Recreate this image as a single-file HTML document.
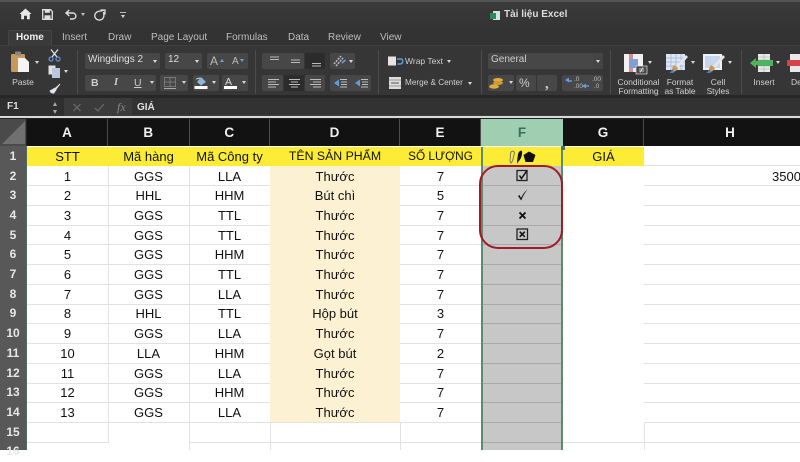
<!DOCTYPE html>
<html><head><meta charset="utf-8"><style>
*{box-sizing:border-box}
html,body{margin:0;padding:0}
body{width:800px;height:450px;overflow:hidden;position:relative;background:#fff;font-family:"Liberation Sans",sans-serif;filter:blur(.3px)}
.t{position:absolute;white-space:nowrap;line-height:12px;color:#d0d0d0;font-size:9px}
.c{transform:translateX(-50%);text-align:center}
.b{position:absolute;background:#474747;border-radius:2px}
.d{position:absolute;background:#2c2c2c}
.sep{position:absolute;width:1px;top:50px;height:44px;background:#4c4c4c}
.ar{position:absolute;width:0;height:0;border-left:2.5px solid transparent;border-right:2.5px solid transparent;border-top:3px solid #d8d8d8}
svg{position:absolute;overflow:visible}
.tab{font-size:10px;top:31.5px;color:#bdbdbd}
.h{position:absolute;top:119px;height:27px;line-height:28px;text-align:center;color:#f0f0f0;font-weight:bold;font-size:13.5px;background:#121212;border-right:1px solid #4d4d4d}
.n{position:absolute;left:0;width:26px;height:19.7px;line-height:19px;text-align:center;color:#e8e8e8;font-weight:bold;font-size:12px}
.row{position:absolute;left:27px;width:773px;height:19.7px;line-height:19.5px;font-size:13px;color:#111}
.row span{position:absolute;top:0;text-align:center;height:100%;display:block}
.A{left:0;width:81px}.B{left:81px;width:81px}.C{left:162px;width:81px}.D{left:243px;width:130px}.E{left:373px;width:81px}.G{left:536px;width:81px}
.l{position:absolute;background:#e2e2e2}
</style></head><body>
<!-- chrome background -->
<div style="position:absolute;left:0;top:0;width:800px;height:97px;background:linear-gradient(#3b3b3b,#333 30%,#303030)"></div>
<div style="position:absolute;left:0;top:0;width:800px;height:2px;background:#555"></div>
<div style="position:absolute;left:0;top:45px;width:800px;height:1px;background:#3f3f3f"></div>
<div style="position:absolute;left:8px;top:30px;width:44px;height:17px;background:#3a3a3a;border:1px solid #444;border-bottom:0"></div>
<div style="position:absolute;left:0;top:46px;width:800px;height:51px;background:#363636"></div>
<div style="position:absolute;left:0;top:95px;width:800px;height:3px;background:#272727"></div>

<!-- quick access -->
<svg style="left:19px;top:8px" width="13" height="12" viewBox="0 0 13 12"><path d="M6.5 0.5L0.5 6H2.2V11.2H5V7.8H8V11.2H10.8V6H12.5Z" fill="#e8e8e8"/></svg>
<svg style="left:42px;top:9px" width="11" height="11" viewBox="0 0 11 11"><path d="M0.7 0.7H8.5L10.3 2.5V10.3H0.7Z" fill="none" stroke="#e0e0e0" stroke-width="1.3"/><rect x="2.8" y="0.8" width="5" height="3" fill="#e0e0e0"/><rect x="2.5" y="6.3" width="6" height="4" fill="#e0e0e0"/></svg>
<svg style="left:65px;top:9px" width="12" height="11" viewBox="0 0 12 11"><path d="M4.3 1L1 4L4.3 7M1.2 4H7.5C12 4 12 10 7.5 10H5" fill="none" stroke="#e0e0e0" stroke-width="1.4"/></svg>
<div class="ar" style="left:81px;top:13px;border-top-color:#bbb"></div>
<svg style="left:94px;top:9px" width="12" height="12" viewBox="0 0 12 12"><path d="M6.5 1H11V5.5M10 1.5C9.5 1.2 8 1.6 7 2C2.5 2 0 5 1 8C2 11 6 12 8.5 10C10.5 8 10 5 9.5 3" fill="none" stroke="#e0e0e0" stroke-width="1.3"/></svg>
<div style="position:absolute;left:120px;top:12px;width:6px;height:1px;background:#bbb"></div>
<div class="ar" style="left:120.5px;top:15px"></div>

<!-- title -->
<svg style="left:490px;top:10px" width="11" height="11" viewBox="0 0 11 11"><rect x="3" y="1" width="7" height="9" fill="#d7e6dd"/><rect x="0" y="3" width="6" height="6" fill="#2f8a5a"/></svg>
<div class="t" style="left:504px;top:9px;font-size:10px;font-weight:bold;color:#dcdcdc">Tài liệu Excel</div>

<!-- tabs -->
<div class="t tab" style="left:16px;font-weight:bold;color:#f0f0f0">Home</div>
<div class="t tab" style="left:62px">Insert</div>
<div class="t tab" style="left:108px">Draw</div>
<div class="t tab" style="left:151px">Page Layout</div>
<div class="t tab" style="left:226px">Formulas</div>
<div class="t tab" style="left:288px">Data</div>
<div class="t tab" style="left:328px">Review</div>
<div class="t tab" style="left:380px">View</div>

<!-- clipboard -->
<svg style="left:10px;top:51px" width="20" height="23" viewBox="0 0 20 23"><rect x="1" y="3" width="14" height="18" rx="1.5" fill="#c9995a"/><rect x="5" y="0.5" width="6" height="4" rx="1" fill="#888"/><path d="M8 7H15L19 11V21H8Z" fill="#f4f4f4"/></svg>
<div class="ar" style="left:34.5px;top:61px"></div>
<div class="t c" style="left:23px;top:76px;font-size:8.5px">Paste</div>
<svg style="left:48px;top:49px" width="13" height="13" viewBox="0 0 13 13"><path d="M3 0.5L9 8M10 0.5L4 8" stroke="#e4e4e4" stroke-width="1.3" fill="none"/><circle cx="3" cy="10" r="2" fill="none" stroke="#5e8fd0" stroke-width="1.3"/><circle cx="10" cy="10" r="2" fill="none" stroke="#5e8fd0" stroke-width="1.3"/></svg>
<svg style="left:48px;top:65px" width="13" height="13" viewBox="0 0 13 13"><rect x="0.5" y="0.5" width="7" height="9" fill="#e0e0e0"/><rect x="4" y="3" width="8" height="10" fill="#b9c8dc"/></svg>
<div class="ar" style="left:64px;top:70px"></div>
<svg style="left:48px;top:83px" width="13" height="11" viewBox="0 0 13 12"><path d="M12.5 0.5L7 5.5L8.5 7L12.8 1.5Z" fill="#e8e8e8"/><path d="M7 5L1 8.5C2 10.5 4 12 6 11.5L9 7Z" fill="#dfe6ee"/><path d="M1 8.5C2 10.5 3 11 4.5 11.5L2 11Z" fill="#5e8fd0"/></svg>
<div class="sep" style="left:77px"></div>

<!-- font -->
<div class="b" style="left:85px;top:53px;width:75px;height:16px"></div>
<div class="t" style="left:88px;top:54px;font-size:10px;color:#ddd">Wingdings 2</div>
<div class="ar" style="left:153px;top:60px"></div>
<div class="b" style="left:165px;top:53px;width:37px;height:16px"></div>
<div class="t" style="left:168px;top:54px;font-size:10px;color:#ddd">12</div>
<div class="ar" style="left:195px;top:60px"></div>
<div class="b" style="left:207px;top:53px;width:41px;height:16px"></div>
<div class="t" style="left:210px;top:55px;font-size:12px;color:#bbb">A</div>
<div class="t" style="left:232px;top:56px;font-size:10px;color:#bbb">A</div>
<div class="ar" style="left:220px;top:59px;border-top:0;border-bottom:3px solid #6fa0d8"></div>
<div class="ar" style="left:240px;top:59px;border-top-color:#6fa0d8"></div>
<div class="b" style="left:85px;top:75px;width:71px;height:16px"></div>
<div class="t" style="left:91px;top:77px;font-size:10.5px;font-weight:bold;color:#ccc">B</div>
<div class="t" style="left:114px;top:77px;font-size:10.5px;font-style:italic;font-family:'Liberation Serif',serif;font-weight:bold;color:#ccc">I</div>
<div class="t" style="left:134px;top:77px;font-size:10.5px;text-decoration:underline;color:#ccc">U</div>
<div class="ar" style="left:150px;top:81px"></div>
<div class="b" style="left:160px;top:75px;width:28px;height:16px"></div>
<svg style="left:164px;top:77px" width="13" height="12" viewBox="0 0 13 12"><path d="M0.5 0.5H11.5V9.5H0.5ZM6 0.5V9.5M0.5 5H11.5" fill="none" stroke="#777"/><path d="M0 11.5H12" stroke="#aaa"/></svg>
<div class="ar" style="left:182px;top:81px"></div>
<div class="b" style="left:193px;top:75px;width:26px;height:16px"></div>
<svg style="left:194px;top:76px" width="14" height="14" viewBox="0 0 14 14"><path d="M7 1L12 6L7 9.5L3 6Z" fill="#8fb4dc"/><path d="M2 3L6 2" stroke="#ccc"/><rect x="0.5" y="10" width="13" height="3" fill="#fff"/></svg>
<div class="ar" style="left:212px;top:81px"></div>
<div class="b" style="left:222px;top:75px;width:26px;height:16px"></div>
<div class="t" style="left:225px;top:76px;font-size:10.5px;color:#ddd">A</div>
<div style="position:absolute;left:224px;top:86px;width:13px;height:3px;background:#fff"></div>
<div class="ar" style="left:242px;top:81px"></div>
<div class="sep" style="left:255px"></div>

<!-- alignment -->
<div class="b" style="left:262px;top:53px;width:42px;height:16px"></div>
<div class="d" style="left:305px;top:53px;width:20px;height:16px"></div>
<svg style="left:262px;top:53px" width="63" height="16" viewBox="0 0 63 16"><path d="M8 4H17M8 6.5H17M29 7H38M29 9.5H38M50 10.5H59M50 13H59" stroke="#bbb" fill="none"/></svg>
<div class="b" style="left:330px;top:53px;width:25px;height:16px"></div>
<svg style="left:333px;top:55px" width="13" height="12" viewBox="0 0 13 12"><path d="M1 9L8 1M3 11L10 3" stroke="#bbb" stroke-width="1.5" stroke-dasharray="2 1" fill="none"/><path d="M9 8L12.5 5" stroke="#6fa0d8" stroke-width="1.5"/></svg>
<div class="ar" style="left:349px;top:60px"></div>
<div class="b" style="left:262px;top:75px;width:21px;height:16px"></div>
<div class="d" style="left:284px;top:75px;width:20px;height:16px"></div>
<div class="b" style="left:305px;top:75px;width:20px;height:16px"></div>
<svg style="left:262px;top:75px" width="63" height="16" viewBox="0 0 63 16"><path d="M6 4.5H17M6 7H14M6 9.5H17M6 12H14M27 4.5H38M29 7H36M27 9.5H38M29 12H36M48 4.5H59M51 7H59M48 9.5H59M51 12H59" stroke="#bdbdbd" fill="none"/></svg>
<div class="b" style="left:330px;top:75px;width:41px;height:16px"></div>
<svg style="left:330px;top:75px" width="41" height="16" viewBox="0 0 41 16"><path d="M4 8L9 4.5V11.5ZM25 8L30 4.5V11.5Z" fill="#5e9be0"/><path d="M10 4.5H17M11 7H17M11 9.5H17M10 12H17M31 4.5H38M32 7H38M32 9.5H38M31 12H38" stroke="#bdbdbd" fill="none"/></svg>
<div class="sep" style="left:378px"></div>

<!-- wrap & merge -->
<svg style="left:388px;top:56px" width="16" height="11" viewBox="0 0 16 11"><rect x="0" y="0.5" width="8" height="9" fill="#e4e4e4"/><path d="M9 3H13C15.5 3 15.5 8 12 8H9.5" stroke="#5e9be0" stroke-width="1.4" fill="none"/></svg>
<div class="t" style="left:405px;top:55px;font-size:8.5px">Wrap Text</div>
<div class="ar" style="left:447px;top:60px"></div>
<svg style="left:389px;top:77px" width="12" height="12" viewBox="0 0 12 12"><rect width="12" height="12" fill="#dcdcdc"/><path d="M2 6H10" stroke="#555"/><path d="M0 3H12M0 9H12" stroke="#999"/></svg>
<div class="t" style="left:405px;top:77px;font-size:8.2px">Merge &amp; Center</div>
<div class="ar" style="left:468px;top:82px"></div>
<div class="sep" style="left:481px"></div>

<!-- number -->
<div class="b" style="left:488px;top:53px;width:115px;height:16px"></div>
<div class="t" style="left:491px;top:54px;font-size:10px;color:#ccc">General</div>
<div style="position:absolute;left:593px;top:53px;width:10px;height:16px;background:#444"></div>
<div class="ar" style="left:596px;top:60px"></div>
<div class="b" style="left:488px;top:75px;width:26px;height:16px"></div>
<svg style="left:489px;top:78px" width="15" height="11" viewBox="0 0 15 11"><ellipse cx="9" cy="2" rx="5" ry="2" fill="#e2aa3c"/><ellipse cx="9" cy="5" rx="5" ry="2" fill="#d19a30"/><ellipse cx="5" cy="8.5" rx="5" ry="2.2" fill="#e2aa3c"/></svg>
<div class="ar" style="left:509px;top:81px"></div>
<div class="b" style="left:516px;top:75px;width:20px;height:16px"></div>
<div class="t" style="left:519px;top:77px;font-size:12px;color:#ccc">%</div>
<div class="b" style="left:537px;top:75px;width:20px;height:16px"></div>
<div class="t" style="left:545px;top:78px;font-size:15px;font-weight:bold;font-family:'Liberation Serif',serif;color:#ccc">,</div>
<div class="b" style="left:562px;top:75px;width:41px;height:16px"></div>
<svg style="left:562px;top:75px" width="41" height="16" viewBox="0 0 41 16"><path d="M3 6L7 3.5V8.5ZM20 12L24 9.5V14.5Z" fill="#5e9be0" transform="translate(0 -1)"/><path d="M7 6H10M24 11H27" stroke="#5e9be0" stroke-width="1.5"/></svg>
<div class="t" style="left:574px;top:76px;font-size:6.5px;line-height:7px;color:#bbb">.0<br>.00</div>
<div class="t" style="left:592px;top:76px;font-size:6.5px;line-height:7px;color:#bbb">.00<br>&nbsp;.0</div>
<div class="sep" style="left:610px"></div>

<!-- styles -->
<svg style="left:624px;top:54px" width="25" height="20" viewBox="0 0 25 20"><rect width="19" height="18" fill="#f0f0f0"/><rect x="5" y="0" width="4" height="18" fill="#d98a92"/><rect x="9" y="5" width="5" height="9" fill="#7f9fd8"/><rect x="5" y="5" width="4" height="9" fill="#7f9fd8"/><rect x="12" y="12" width="11" height="8" fill="#4a4a4a" stroke="#ddd" stroke-width="0.7"/><path d="M15 15H20M15 17H20M19 13.5L16 18.5" stroke="#eee" stroke-width="0.7"/></svg>
<div class="ar" style="left:648px;top:61px"></div>
<div class="t c" style="left:638.5px;top:78px;font-size:8.4px;line-height:9px">Conditional<br>Formatting</div>
<svg style="left:666px;top:54px" width="23" height="20" viewBox="0 0 23 20"><rect width="19" height="16" fill="#dde6f2"/><path d="M0 4H19M0 8H19M0 12H19M5 0V16M10 0V16M15 0V16" stroke="#9fb4d4" stroke-width="0.7"/><path d="M20 1L10 12L12 14L22 3Z" fill="#e6e6e6"/><path d="M8 11L12 14C11 17 8 18 5 19C6 16 6 13 8 11Z" fill="#c9995a"/><path d="M3 19C5 18 6 16 7 15L8 19Z" fill="#3f7fd0"/></svg>
<div class="ar" style="left:691px;top:61px"></div>
<div class="t c" style="left:680px;top:78px;font-size:8.4px;line-height:9px">Format<br>as Table</div>
<svg style="left:703px;top:54px" width="23" height="20" viewBox="0 0 23 20"><rect width="19" height="16" fill="#eef2f8"/><rect x="2" y="2" width="15" height="12" fill="#c5d6ec"/><path d="M20 1L10 12L12 14L22 3Z" fill="#e6e6e6"/><path d="M8 11L12 14C11 17 8 18 5 19C6 16 6 13 8 11Z" fill="#c9995a"/><path d="M3 19C5 18 6 16 7 15L8 19Z" fill="#3f7fd0"/></svg>
<div class="ar" style="left:728px;top:61px"></div>
<div class="t c" style="left:718px;top:78px;font-size:8.4px;line-height:9px">Cell<br>Styles</div>
<div class="sep" style="left:741px"></div>
<svg style="left:750px;top:54px" width="25" height="18" viewBox="0 0 25 18"><rect x="8" y="0" width="12" height="18" fill="#e8e8e8"/><path d="M8 6H20V12H8ZM8 3H20M8 15H20M14 0V6M14 12V18" stroke="#aaa" stroke-width="0.6" fill="none"/><rect x="8" y="6" width="15" height="6" fill="#4eb35e"/><path d="M0 9L6 4V14Z" fill="#4eb35e"/><rect x="5" y="7" width="4" height="4" fill="#4eb35e"/></svg>
<div class="ar" style="left:776px;top:61px"></div>
<div class="t c" style="left:764px;top:76px;font-size:8.5px">Insert</div>
<svg style="left:787px;top:54px" width="13" height="18" viewBox="0 0 13 18"><rect x="3" y="0" width="10" height="18" fill="#e8e8e8"/><rect x="0" y="6" width="13" height="6" fill="#d8404a"/></svg>
<div class="t" style="left:791px;top:76px;font-size:8.5px">De</div>

<!-- formula bar -->
<div style="position:absolute;left:0;top:98px;width:800px;height:18px;background:#3b3b3b"></div>
<div style="position:absolute;left:0;top:98px;width:64px;height:18px;background:#2f2f2f"></div>
<div style="position:absolute;left:132px;top:98px;width:668px;height:17px;background:#323232"></div>
<div class="t" style="left:7px;top:101px;font-size:10px;font-weight:bold;color:#ddd">F1</div>
<div class="ar" style="left:53px;top:102px;border-top:0;border-bottom:4px solid #aaa"></div>
<div class="ar" style="left:53px;top:110px;border-top:4px solid #aaa"></div>
<svg style="left:73px;top:103px" width="35" height="9" viewBox="0 0 35 9"><path d="M0.5 1L7.5 8M7.5 1L0.5 8M22 5L25 8L31 1" stroke="#666" stroke-width="1.3" fill="none"/></svg>
<div class="t" style="left:117px;top:101px;font-family:'Liberation Serif',serif;font-style:italic;font-size:12px;color:#888">fx</div>
<div class="t" style="left:137px;top:102px;font-size:10px;font-weight:bold;color:#e0e0e0">GIÁ</div>
<div style="position:absolute;left:0;top:116px;width:800px;height:2px;background:#d8d8d8"></div>
<div style="position:absolute;left:0;top:118px;width:800px;height:1px;background:#222"></div>

<!-- headers -->
<div class="h" style="left:0;width:27px;background:#4a4a4a;border-right:1px solid #222"></div>
<svg style="left:1px;top:120px" width="25" height="25" viewBox="0 0 25 25"><path d="M24 1V24H1Z" fill="#707070"/></svg>
<div class="h" style="left:27px;width:81px">A</div>
<div class="h" style="left:108px;width:81.5px">B</div>
<div class="h" style="left:189.5px;width:80.5px">C</div>
<div class="h" style="left:270px;width:130px">D</div>
<div class="h" style="left:400px;width:81px">E</div>
<div class="h" style="left:481px;width:82px;background:#9fceb0;color:#3c6f55;border-right:0">F</div>
<div class="h" style="left:563px;width:81px">G</div>
<div class="h" style="left:644px;width:172px;border-right:0">H</div>

<!-- row headers -->
<div style="position:absolute;left:0;top:146px;width:26px;height:304px;background:#585858"></div>
<div style="position:absolute;left:26px;top:146px;width:1px;height:304px;background:#4d6b5e"></div>
<div class="n" style="top:147px">1</div><div class="n" style="top:166.5px">2</div><div class="n" style="top:186.2px">3</div><div class="n" style="top:205.9px">4</div><div class="n" style="top:225.6px">5</div><div class="n" style="top:245.3px">6</div><div class="n" style="top:265px">7</div><div class="n" style="top:284.7px">8</div><div class="n" style="top:304.4px">9</div><div class="n" style="top:324.1px">10</div><div class="n" style="top:343.8px">11</div><div class="n" style="top:363.5px">12</div><div class="n" style="top:383.2px">13</div><div class="n" style="top:402.9px">14</div><div class="n" style="top:422.6px">15</div><div class="n" style="top:442.3px">16</div>

<!-- D fill -->
<div style="position:absolute;left:270px;top:166px;width:130px;height:257px;background:#fdf1d3"></div>
<!-- yellow -->
<div style="position:absolute;left:27px;top:147px;width:617px;height:19px;background:#fdec35"></div>

<!-- grid -->
<div class="l" style="left:27px;top:185px;width:243px;height:1px"></div>
<div class="l" style="left:27px;top:205px;width:243px;height:1px"></div>
<div class="l" style="left:27px;top:225px;width:243px;height:1px"></div>
<div class="l" style="left:27px;top:244px;width:243px;height:1px"></div>
<div class="l" style="left:27px;top:264px;width:243px;height:1px"></div>
<div class="l" style="left:27px;top:284px;width:243px;height:1px"></div>
<div class="l" style="left:27px;top:304px;width:243px;height:1px"></div>
<div class="l" style="left:27px;top:323px;width:243px;height:1px"></div>
<div class="l" style="left:27px;top:343px;width:243px;height:1px"></div>
<div class="l" style="left:27px;top:363px;width:243px;height:1px"></div>
<div class="l" style="left:27px;top:383px;width:243px;height:1px"></div>
<div class="l" style="left:27px;top:402px;width:243px;height:1px"></div>
<div class="l" style="left:27px;top:422px;width:243px;height:1px"></div>
<div class="l" style="left:27px;top:442px;width:81px;height:1px"></div>
<div class="l" style="left:189px;top:442px;width:611px;height:1px"></div>
<div class="l" style="left:400px;top:185px;width:81px;height:1px"></div>
<div class="l" style="left:400px;top:205px;width:81px;height:1px"></div>
<div class="l" style="left:400px;top:225px;width:81px;height:1px"></div>
<div class="l" style="left:400px;top:244px;width:81px;height:1px"></div>
<div class="l" style="left:400px;top:264px;width:81px;height:1px"></div>
<div class="l" style="left:400px;top:284px;width:81px;height:1px"></div>
<div class="l" style="left:400px;top:304px;width:81px;height:1px"></div>
<div class="l" style="left:400px;top:323px;width:81px;height:1px"></div>
<div class="l" style="left:400px;top:343px;width:81px;height:1px"></div>
<div class="l" style="left:400px;top:363px;width:81px;height:1px"></div>
<div class="l" style="left:400px;top:383px;width:81px;height:1px"></div>
<div class="l" style="left:400px;top:402px;width:81px;height:1px"></div>
<div class="l" style="left:270px;top:422px;width:211px;height:1px"></div>
<div class="l" style="left:644px;top:165px;width:156px;height:1px"></div>
<div class="l" style="left:644px;top:185px;width:156px;height:1px"></div>
<div class="l" style="left:644px;top:205px;width:156px;height:1px"></div>
<div class="l" style="left:644px;top:225px;width:156px;height:1px"></div>
<div class="l" style="left:644px;top:244px;width:156px;height:1px"></div>
<div class="l" style="left:644px;top:264px;width:156px;height:1px"></div>
<div class="l" style="left:644px;top:284px;width:156px;height:1px"></div>
<div class="l" style="left:644px;top:304px;width:156px;height:1px"></div>
<div class="l" style="left:644px;top:323px;width:156px;height:1px"></div>
<div class="l" style="left:644px;top:343px;width:156px;height:1px"></div>
<div class="l" style="left:644px;top:363px;width:156px;height:1px"></div>
<div class="l" style="left:644px;top:383px;width:156px;height:1px"></div>
<div class="l" style="left:644px;top:402px;width:156px;height:1px"></div>
<div class="l" style="left:644px;top:422px;width:156px;height:1px"></div>
<div class="l" style="left:108px;top:166px;width:1px;height:277px"></div>
<div class="l" style="left:189px;top:166px;width:1px;height:284px"></div>
<div class="l" style="left:270px;top:423px;width:1px;height:27px"></div>
<div class="l" style="left:400px;top:423px;width:1px;height:27px"></div>
<div class="l" style="left:644px;top:423px;width:1px;height:27px"></div>

<!-- F column -->
<div style="position:absolute;left:481px;top:166px;width:82px;height:284px;background:#c7c7c7"></div>
<div style="position:absolute;left:481px;top:185px;width:82px;height:1px;background:#a9a9a9"></div>
<div style="position:absolute;left:481px;top:205px;width:82px;height:1px;background:#a9a9a9"></div>
<div style="position:absolute;left:481px;top:225px;width:82px;height:1px;background:#a9a9a9"></div>
<div style="position:absolute;left:481px;top:244px;width:82px;height:1px;background:#a9a9a9"></div>
<div style="position:absolute;left:481px;top:264px;width:82px;height:1px;background:#a9a9a9"></div>
<div style="position:absolute;left:481px;top:284px;width:82px;height:1px;background:#a9a9a9"></div>
<div style="position:absolute;left:481px;top:304px;width:82px;height:1px;background:#a9a9a9"></div>
<div style="position:absolute;left:481px;top:323px;width:82px;height:1px;background:#a9a9a9"></div>
<div style="position:absolute;left:481px;top:343px;width:82px;height:1px;background:#a9a9a9"></div>
<div style="position:absolute;left:481px;top:363px;width:82px;height:1px;background:#a9a9a9"></div>
<div style="position:absolute;left:481px;top:383px;width:82px;height:1px;background:#a9a9a9"></div>
<div style="position:absolute;left:481px;top:402px;width:82px;height:1px;background:#a9a9a9"></div>
<div style="position:absolute;left:481px;top:422px;width:82px;height:1px;background:#a9a9a9"></div>
<div style="position:absolute;left:481px;top:442px;width:82px;height:1px;background:#a9a9a9"></div>
<div style="position:absolute;left:481px;top:147px;width:2px;height:303px;background:#5d8a72"></div>
<div style="position:absolute;left:561px;top:147px;width:2px;height:303px;background:#5d8a72"></div>
<div style="position:absolute;left:561px;top:146px;width:4px;height:4px;background:#3f7f5c"></div>

<!-- cell text -->
<div class="row" style="top:146.5px"><span class="A">STT</span><span class="B">Mã hàng</span><span class="C">Mã Công ty</span><span class="D" style="font-size:12.3px">TÊN SẢN PHẨM</span><span class="E" style="font-size:11.8px">SỐ LƯỢNG</span><span class="G">GIÁ</span></div>
<div class="row" style="top:166.5px"><span class="A">1</span><span class="B">GGS</span><span class="C">LLA</span><span class="D">Thước</span><span class="E">7</span><span style="left:745px;width:40px;text-align:left">3500</span></div>
<div class="row" style="top:186.2px"><span class="A">2</span><span class="B">HHL</span><span class="C">HHM</span><span class="D">Bút chì</span><span class="E">5</span></div>
<div class="row" style="top:205.9px"><span class="A">3</span><span class="B">GGS</span><span class="C">TTL</span><span class="D">Thước</span><span class="E">7</span></div>
<div class="row" style="top:225.6px"><span class="A">4</span><span class="B">GGS</span><span class="C">TTL</span><span class="D">Thước</span><span class="E">7</span></div>
<div class="row" style="top:245.3px"><span class="A">5</span><span class="B">GGS</span><span class="C">HHM</span><span class="D">Thước</span><span class="E">7</span></div>
<div class="row" style="top:265px"><span class="A">6</span><span class="B">GGS</span><span class="C">TTL</span><span class="D">Thước</span><span class="E">7</span></div>
<div class="row" style="top:284.7px"><span class="A">7</span><span class="B">GGS</span><span class="C">LLA</span><span class="D">Thước</span><span class="E">7</span></div>
<div class="row" style="top:304.4px"><span class="A">8</span><span class="B">HHL</span><span class="C">TTL</span><span class="D">Hộp bút</span><span class="E">3</span></div>
<div class="row" style="top:324.1px"><span class="A">9</span><span class="B">GGS</span><span class="C">LLA</span><span class="D">Thước</span><span class="E">7</span></div>
<div class="row" style="top:343.8px"><span class="A">10</span><span class="B">LLA</span><span class="C">HHM</span><span class="D">Gọt bút</span><span class="E">2</span></div>
<div class="row" style="top:363.5px"><span class="A">11</span><span class="B">GGS</span><span class="C">LLA</span><span class="D">Thước</span><span class="E">7</span></div>
<div class="row" style="top:383.2px"><span class="A">12</span><span class="B">GGS</span><span class="C">HHM</span><span class="D">Thước</span><span class="E">7</span></div>
<div class="row" style="top:402.9px"><span class="A">13</span><span class="B">GGS</span><span class="C">LLA</span><span class="D">Thước</span><span class="E">7</span></div>

<!-- F symbols -->
<svg style="left:508px;top:148px" width="30" height="17" viewBox="0 0 30 17"><path d="M2 13L2.5 6C2.5 3 6 2 6.5 5L4.5 13L3 15Z" fill="none" stroke="#777" stroke-width="1"/><path d="M9 14L10 6C11 3 13 2 14 3C14.5 7 13 11 10.5 13.5L9.5 15.5Z" fill="#111"/><path d="M21 3.5L27.5 7L25 14H17.5L15.5 7Z" fill="#111"/></svg>
<svg style="left:516px;top:169px" width="13" height="13" viewBox="0 0 13 13"><rect x="1" y="1.5" width="10" height="10" fill="none" stroke="#222" stroke-width="1.3"/><path d="M3.5 6.5L5.5 9.5L11 1.5" fill="none" stroke="#111" stroke-width="1.5"/></svg>
<svg style="left:517px;top:189px" width="11" height="12" viewBox="0 0 11 12"><path d="M1 7L2.5 6L4 9C6 5 8 2.5 10.5 0.5C8 3.5 6 7 4.2 11.5Z" fill="#111"/></svg>
<svg style="left:518px;top:211px" width="9" height="9" viewBox="0 0 9 9"><path d="M1.5 1.5L7.5 7.5M7.5 1.5L1.5 7.5" stroke="#111" stroke-width="1.8"/></svg>
<svg style="left:516px;top:228px" width="13" height="13" viewBox="0 0 13 13"><rect x="1" y="1" width="10.5" height="10.5" fill="none" stroke="#222" stroke-width="1.3"/><path d="M3.7 3.7L8.8 8.8M8.8 3.7L3.7 8.8" stroke="#111" stroke-width="1.6"/></svg>

<!-- red outline -->
<div style="position:absolute;left:479px;top:165px;width:84px;height:84px;border:2.5px solid #a01b25;border-radius:19px"></div>
</body></html>
